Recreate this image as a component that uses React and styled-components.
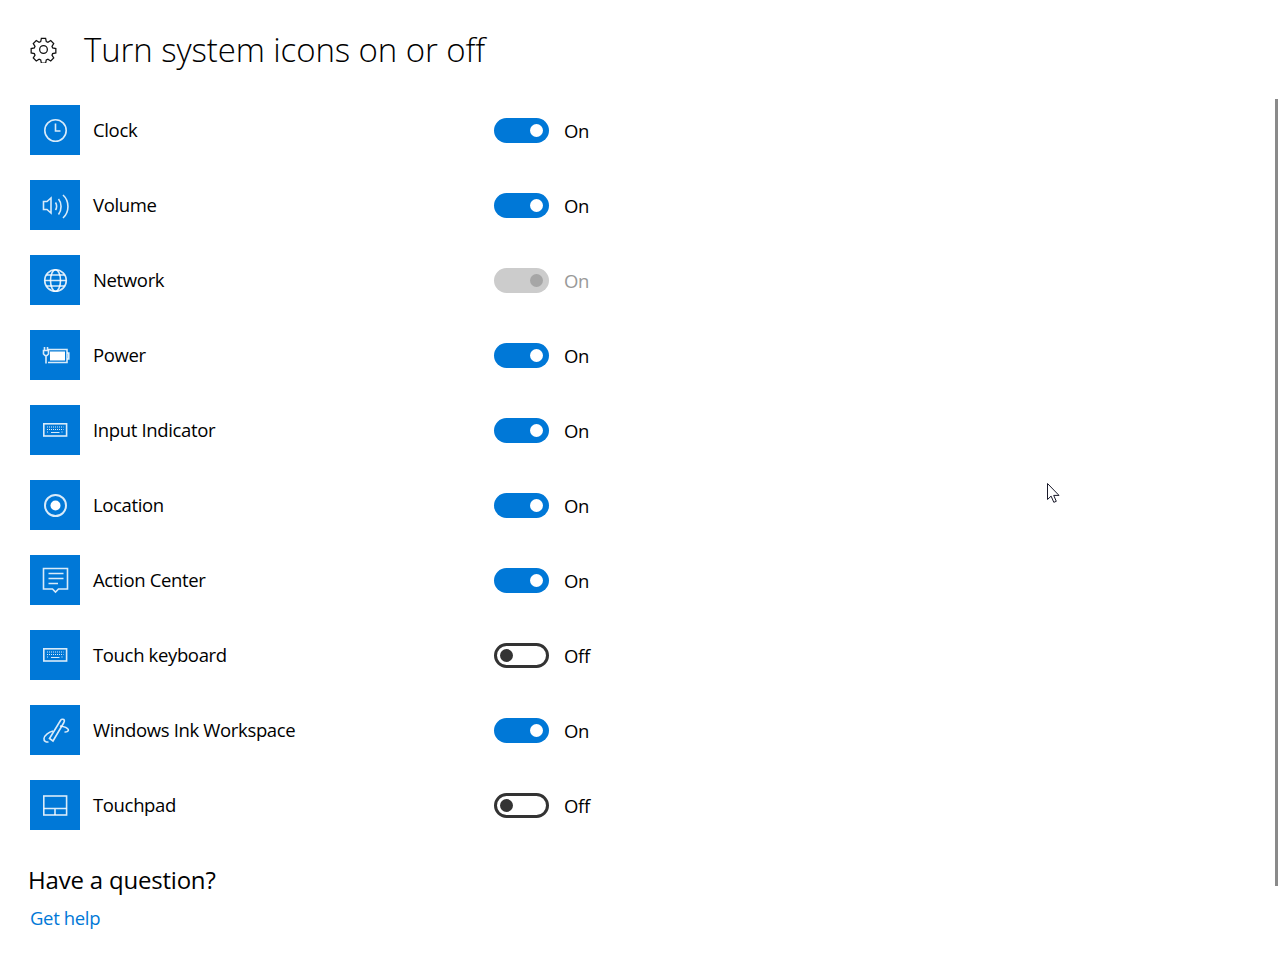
import React from "react";
import styled, { createGlobalStyle } from "styled-components";

const GlobalStyle = createGlobalStyle`
  html, body {
    margin: 0;
    background: #fff;
    overflow: hidden;
  }
  body {
    font-family: "Open Sans", "Noto Sans", sans-serif;
    color: #000;
  }
`;

// Icons are all drawn on a 50x50 tile
const ClockIcon = () => (
  <g>
    <circle cx="25.5" cy="25.5" r="10.700" />
    <path d="M25.500 18.500v7.500h5" />
  </g>
);

const VolumeIcon = () => (
  <g>
    <path d="M13.500 21.500h3.500l4-3.500v15l-4-3.500h-3.500z" />
    <path d="M25.500 22.500c1.500 2 1.500 5.500 0 7.500" />
    <path d="M28.500 19c3.400 4 3.400 11 0 15.500" />
    <path d="M33 15c6.600 6 6.600 17 0 23" />
  </g>
);

const GlobeIcon = () => (
  <g>
    <circle cx="25.500" cy="25.500" r="10.800" />
    <ellipse cx="25.500" cy="25.500" rx="5" ry="10.800" />
    <path d="M14.700 25.500h21.600M16.500 20h18M16.500 31h18" />
  </g>
);

const PowerIcon = () => (
  <g>
    <path d="M18 19.500h19v13h-19" />
    <path d="M37 23h1.800v6h-1.800" />
    <rect x="20" y="21.500" width="15" height="9" fill="#fff" stroke="none" />
    <path d="M14.500 17v3M17.500 17v3M13.500 20.500h5v3.500l-1.500 1.500h-2l-1.500-1.500zM16 25.500v8" />
  </g>
);

const KeyboardIcon = () => (
  <g>
    <rect x="13.800" y="18.800" width="22.800" height="12.200" />
    <path
      strokeWidth="1"
      strokeDasharray="1 1"
      d="M17 22h16.500M17 24.500h16.500"
    />
    <path strokeWidth="1" strokeDasharray="1 1" d="M17 27h2M31.500 27h2" />
    <path strokeWidth="1" d="M21 27.500h8.500" />
  </g>
);

const LocationIcon = () => (
  <g>
    <circle cx="25.500" cy="25.500" r="10.500" strokeWidth="2" />
    <circle cx="25.500" cy="25.500" r="5" fill="#fff" stroke="none" />
  </g>
);

const ActionIcon = () => (
  <g>
    <path d="M13.500 13.500h24v20.500h-9l-3 3-3-3h-9z" />
    <path d="M18.500 18.500h15M18.500 23.500h15M18.500 28.500h9.500" />
  </g>
);

const InkIcon = () => (
  <g>
    <path d="M19.500 33.500l11-18c.8-1.300 2.400-1.600 3.200-1 .8.600.8 1.800.2 3l-10.900 18.500z" />
    <path d="M30 21c3 .5 7.500 1.800 8.300 3.500.6 1.400-1.300 2.700-3.800 2.500" />
    <path d="M23 26c-4 1-8.500 4-9 7.500-.3 2.500 2 3.800 4.500 3.500" />
  </g>
);

const TouchpadIcon = () => (
  <g>
    <rect x="13.800" y="16" width="22.800" height="19" />
    <path d="M13.800 28.500h22.800M25 28.500v6.500" />
  </g>
);

const items = [
  { name: "Clock", Icon: ClockIcon, state: "on" },
  { name: "Volume", Icon: VolumeIcon, state: "on" },
  { name: "Network", Icon: GlobeIcon, state: "disabled" },
  { name: "Power", Icon: PowerIcon, state: "on" },
  { name: "Input Indicator", Icon: KeyboardIcon, state: "on" },
  { name: "Location", Icon: LocationIcon, state: "on" },
  { name: "Action Center", Icon: ActionIcon, state: "on" },
  { name: "Touch keyboard", Icon: KeyboardIcon, state: "off" },
  { name: "Windows Ink Workspace", Icon: InkIcon, state: "on" },
  { name: "Touchpad", Icon: TouchpadIcon, state: "off" },
];

const App = () => {
  return (
    <Page>
      <GlobalStyle />
      <Header>
        <svg width="27" height="27" viewBox="0 0 28 28" fill="none" stroke="#111" strokeWidth="1.300">
          <circle cx="14" cy="14" r="4" />
          <path d="M11.800 2.500h4.400l.7 3.300 1.700.7 2.900-1.800 3.100 3.100-1.800 2.900.7 1.700 3.300.7v4.400l-3.300.7-.7 1.700 1.800 2.900-3.100 3.100-2.900-1.800-1.700.7-.7 3.300h-4.400l-.7-3.300-1.700-.7-2.900 1.800-3.100-3.100 1.800-2.900-.7-1.700-3.300-.7v-4.400l3.300-.7.7-1.700-1.800-2.900 3.100-3.100 2.900 1.800 1.700-.7z" />
        </svg>
        <Title>Turn system icons on or off</Title>
      </Header>
      <List>
        {items.map(({ name, Icon, state }) => (
          <Row key={name}>
            <Tile>
              <svg width="50" height="50" viewBox="0 0 50 50" fill="none" stroke="#fff" strokeOpacity="0.85" strokeWidth="1.600">
                <Icon />
              </svg>
            </Tile>
            <Label>{name}</Label>
            <Track $state={state}>
              <Knob $state={state} />
            </Track>
            <StateText $disabled={state === "disabled"}>
              {state === "off" ? "Off" : "On"}
            </StateText>
          </Row>
        ))}
      </List>
      <Question>Have a question?</Question>
      <HelpLink href="#">Get help</HelpLink>
      <Scrollbar />
      <Cursor width="15" height="21" viewBox="0 0 15 21">
        <path
          d="M1.500 .5v16l3.600-3.400 2.700 6.200 2.500-1-2.600-5.900h5.300z"
          fill="#fff"
          stroke="#1a1a2a"
          strokeWidth="1"
        />
      </Cursor>
    </Page>
  );
};

const Page = styled.div`
  position: relative;
  height: 960px;
  padding-left: 30px;
  box-sizing: border-box;
`;

const Header = styled.header`
  display: flex;
  align-items: center;
  height: 105px;
  padding-bottom: 7px;
  box-sizing: border-box;

  svg {
    flex: none;
    margin-right: 27px;
  }
`;

const Title = styled.h1`
  margin: 0;
  font-size: 33px;
  font-weight: 300;
  letter-spacing: -0.1px;
  color: #000;
`;

const List = styled.div`
  display: flex;
  flex-direction: column;
  gap: 25px;
`;

const Row = styled.div`
  display: flex;
  align-items: center;
  height: 50px;
`;

const Tile = styled.div`
  flex: none;
  width: 50px;
  height: 50px;
  background: #0078d7;
`;

const Label = styled.div`
  width: 401px;
  margin: -1px 0 0 13px;
  font-size: 18.500px;
  letter-spacing: -0.350px;
`;

const Track = styled.div`
  display: flex;
  align-items: center;
  justify-content: ${(p) => (p.$state === "off" ? "flex-start" : "flex-end")};
  width: 55px;
  height: 25px;
  padding: 0 6px;
  box-sizing: border-box;
  border-radius: 13px;
  background: ${(p) =>
    p.$state === "on" ? "#0078d7" : p.$state === "disabled" ? "#cccccc" : "#fff"};
  border: ${(p) => (p.$state === "off" ? "3px solid #333" : "none")};
`;

const Knob = styled.span`
  width: 13px;
  height: 13px;
  margin-left: ${(p) => (p.$state === "off" ? "-3px" : "0")};
  border-radius: 50%;
  background: ${(p) =>
    p.$state === "on" ? "#fff" : p.$state === "disabled" ? "#a6a6a6" : "#333"};
`;

const StateText = styled.div`
  margin: 1px 0 0 15px;
  font-size: 18.500px;
  letter-spacing: -0.350px;
  color: ${(p) => (p.$disabled ? "#999" : "#000")};
`;

const Question = styled.h2`
  margin: 31px 0 0 -2px;
  font-size: 24px;
  font-weight: 400;
  letter-spacing: -0.200px;
  line-height: 38px;
`;

const HelpLink = styled.a`
  display: block;
  margin-top: 6px;
  font-size: 18.500px;
  letter-spacing: -0.350px;
  color: #0078d7;
  text-decoration: none;
`;

const Scrollbar = styled.div`
  position: absolute;
  top: 99px;
  left: 1275px;
  width: 3px;
  height: 787px;
  background: #8a8a8a;
`;

const Cursor = styled.svg`
  position: absolute;
  top: 483px;
  left: 1046px;
`;

export default App;
